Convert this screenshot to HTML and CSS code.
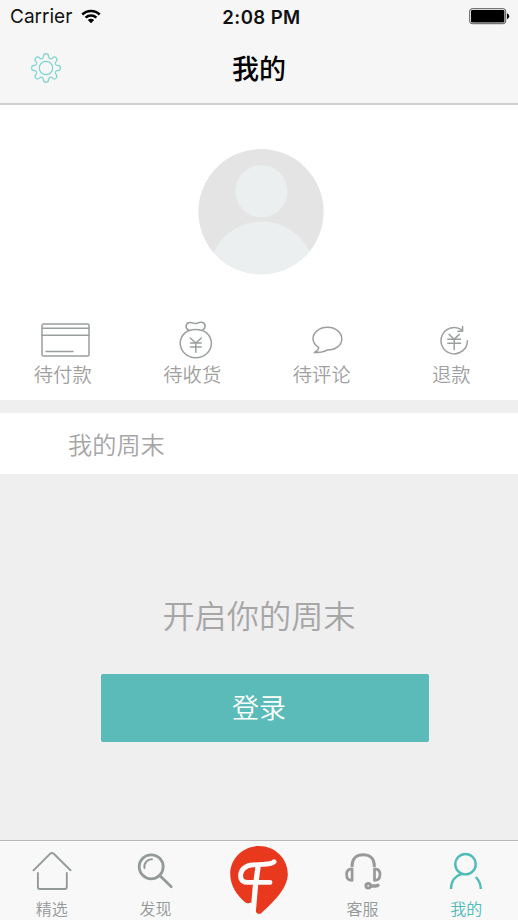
FILE: index.html
```html
<!DOCTYPE html>
<html lang="zh-CN">
<head>
<meta charset="utf-8">
<title>我的</title>
<link rel="stylesheet" href="styles.css">
</head>
<body>
<div class="screen">
  <header class="header">
    <div class="status">
      <div class="carrier">
        <span>Carrier</span>
        <svg class="wifi" width="20" height="15" viewBox="0 0 20 15">
          <path d="M0.4 4.6A13.8 13.8 0 0 1 19.6 4.6L17.8 6.4A11.2 11.2 0 0 0 2.2 6.4Z"/>
          <path d="M3.7 7.8A9.2 9.2 0 0 1 16.3 7.8L14.5 9.6A6.6 6.6 0 0 0 5.5 9.6Z"/>
          <path d="M6.8 11A4.6 4.6 0 0 1 13.2 11L10 14.2Z"/>
        </svg>
      </div>
      <time class="time">2:08 PM</time>
      <svg class="battery" width="41" height="17" viewBox="0 0 41 17">
        <rect x="0.7" y="0.7" width="36" height="15" rx="2.5" fill="none" stroke="#555" stroke-width="1"/>
        <rect x="2" y="2" width="33.4" height="12.4" rx="1.2"/>
        <path d="M38 5.2Q40.2 6 40.2 8.2T38 11.2Z"/>
      </svg>
    </div>
    <div class="navbar">
      <svg class="gear" width="32" height="32" viewBox="-16 -16 32 32">
        <defs><path id="tooth" d="M-3.9-9.4Q-2.3-10-2.6-11.8Q-2.5-14.4 0-14.4T2.6-11.8Q2.3-10 3.9-9.4"/></defs>
        <use href="#tooth"/><use href="#tooth" transform="rotate(45)"/>
        <use href="#tooth" transform="rotate(90)"/><use href="#tooth" transform="rotate(135)"/>
        <use href="#tooth" transform="rotate(180)"/><use href="#tooth" transform="rotate(225)"/>
        <use href="#tooth" transform="rotate(270)"/><use href="#tooth" transform="rotate(315)"/>
        <circle r="6.7"/>
      </svg>
      <h1 class="title">我的</h1>
    </div>
  </header>

  <section class="profile">
    <svg class="avatar" width="126" height="126" viewBox="0 0 126 126">
      <defs><clipPath id="disc"><circle cx="63" cy="62.7" r="62.6"/></clipPath></defs>
      <circle cx="63" cy="62.7" r="62.6" fill="#e4e4e4"/>
      <g clip-path="url(#disc)" fill="#ebeff0">
        <circle cx="63.4" cy="42.3" r="26"/>
        <circle cx="63.8" cy="125.6" r="53"/>
      </g>
    </svg>
    <nav class="orders">
      <a class="order">
        <svg class="line" width="60" height="40" viewBox="33 320 60 40">
          <rect x="42" y="324.1" width="47" height="32" rx="1.3"/>
          <path d="M42 328.3H89M42 335.2H89M46 351.5H73"/>
        </svg>
        <span>待付款</span>
      </a>
      <a class="order">
        <svg class="line" width="60" height="40" viewBox="162.5 320 60 40">
          <ellipse cx="196.3" cy="343.3" rx="15.6" ry="14.4"/>
          <path class="bow" d="M189.5 330.5C185 328 186 322.6 190.5 322.4C193 322.3 194.5 323.6 196 323.6S199 322 202 322.3C206.5 323 207 328 202.5 330.5Q196 328.6 189.5 330.5Z"/>
          <path d="M190.8 338L196.3 343L201.8 338M191 343H201.7M191 347H201.7M196.3 343V352.3"/>
        </svg>
        <span>待收货</span>
      </a>
      <a class="order">
        <svg class="line" width="60" height="40" viewBox="292 320 60 40">
          <path d="M318.7 347.4C314.8 345 313 342 313 338.8C313 332.2 319.5 327.3 327.4 327.3S341.8 332.2 341.8 338.8S335.5 350 327.4 350Q324.5 351.5 321.5 352.1Q318 352.6 314.3 352.6Q318.5 350.3 318.7 347.4Z"/>
        </svg>
        <span>待评论</span>
      </a>
      <a class="order">
        <svg class="line" width="60" height="40" viewBox="421.5 320 60 40">
          <path d="M462.3 329.9A13.2 13.2 0 1 0 467.9 340.7M463.1 326.4V331.3H458.3"/>
          <path d="M449.6 334.4L454.7 339.2L459.8 334.4M448.3 339.2H461.1M448.3 343.2H461.1M454.7 339.2V349.5"/>
        </svg>
        <span>退款</span>
      </a>
    </nav>
  </section>

  <section class="weekend">我的周末</section>

  <main class="login">
    <p class="slogan">开启你的周末</p>
    <button class="login-btn">登录</button>
  </main>

  <nav class="tabs">
    <a class="tab">
      <svg width="60" height="56" viewBox="21.5 843 60 56">
        <path d="M33 870.3L49.5 853.8Q51.4 852 53.3 853.8L70 870.3M37.4 873V887Q37.4 889 39.4 889H64.3Q66.3 889 66.3 887V873" stroke-width="1.9"/>
      </svg>
      <span>精选</span>
    </a>
    <a class="tab">
      <svg width="60" height="56" viewBox="125 843 60 56">
        <circle cx="151.2" cy="866.8" r="12" stroke-width="2.8"/>
        <path d="M144.5 868A7.3 7.3 0 0 1 152 859.3" stroke-width="2"/>
        <path d="M160 875.8L171.3 886.7" stroke-width="2.7"/>
      </svg>
      <span>发现</span>
    </a>
    <a class="tab tab-logo">
      <svg width="60" height="75" viewBox="229 843 60 75">
        <path d="M259 846C243 846 230.2 858.5 230.2 874C230.2 885 237 896 245.5 902.4Q248.5 904.2 251 902.5L255.6 911Q257 915.4 261.2 913.3C272 903 287.8 889 287.8 874C287.8 858.5 275 846 259 846Z" fill="#e8391e" stroke="none"/>
        <path d="M274 861.8C271.5 864.2 267.5 864.1 263 864.4L253 864.9C245.5 865.3 240.8 869.5 240.6 875C240.4 880.6 243.5 882.4 248 882.4H270" stroke="#fcfcfc" stroke-width="4.9"/>
        <path d="M258.3 865L255.4 886L253 914" stroke="#fcfcfc" stroke-width="5.3" stroke-linecap="butt"/>
      </svg>
    </a>
    <a class="tab">
      <svg width="60" height="56" viewBox="332.5 843 60 56">
        <g stroke="#999" stroke-linecap="butt">
          <path d="M351.6 867V865.5C351.6 858.5 356 854.8 362.7 854.8S373.8 858.5 373.8 865.5V867" stroke-width="3"/>
          <path d="M351.6 868.8V880.5C348 880.5 346.1 878.2 346.1 874.6S348 868.8 351.6 868.8ZM374 868.8V880.5C377.6 880.5 379.5 878.2 379.5 874.6S377.6 868.8 374 868.8Z" stroke-width="2.7"/>
          <circle cx="367.7" cy="885.8" r="2.3" stroke-width="2.9"/>
          <path d="M370 886H375Q377 886 378.5 884.3" stroke-width="3.3"/>
        </g>
      </svg>
      <span>客服</span>
    </a>
    <a class="tab active">
      <svg width="60" height="56" viewBox="436 843 60 56">
        <circle cx="465.5" cy="864.2" r="10.2" stroke-width="2.4"/>
        <path d="M451 889C451 881.5 455 875.7 462 873.8M475.8 877C479 880.3 480.7 884.4 480.8 889" stroke-width="2.4" stroke-linecap="butt"/>
      </svg>
      <span>我的</span>
    </a>
  </nav>
</div>
</body>
</html>
```
FILE: styles.css
```css
* { box-sizing: border-box; }
body {
  margin: 0;
  font-family: "Noto Sans CJK SC", sans-serif;
  font-weight: 350;
  background: #efefef;
}
.screen {
  width: 518px;
  height: 920px;
  display: flex;
  flex-direction: column;
  overflow: hidden;
}
.header {
  height: 105px;
  background: #f6f6f6;
  border-bottom: 2px solid #d0d0d0;
}
.status {
  height: 33px;
  padding: 0 8px 0 10px;
  display: grid;
  grid-template-columns: 1fr auto 1fr;
  align-items: center;
  font-family: Inter, sans-serif;
  font-size: 19px;
  font-weight: 400;
  color: #111;
}
.carrier { display: flex; align-items: center; gap: 9px; }
.time {
  padding-left: 3px;
  font-weight: 600;
  font-size: 18.6px;
  letter-spacing: 0.4px;
}
.battery { justify-self: end; }
.navbar {
  height: 69px;
  padding: 0 30px;
  display: grid;
  grid-template-columns: 1fr auto 1fr;
  align-items: center;
}
.gear { fill: none; stroke: #7ed3d1; stroke-width: 1.2; }
.title {
  margin: 0;
  font-size: 27px;
  line-height: 40px;
  font-weight: 500;
  color: #000;
}
.profile {
  height: 295px;
  padding-top: 44px;
  background: #fff;
  display: flex;
  flex-direction: column;
  align-items: center;
}
.avatar { margin-left: 3px; }
.orders {
  width: 100%;
  margin-top: 45px;
  padding-right: 3px;
  display: grid;
  grid-template-columns: repeat(4, 129.5px);
  margin-left: -4px;
}
.order {
  display: flex;
  flex-direction: column;
  align-items: center;
  font-size: 19.3px;
  line-height: 28px;
  color: #a0a0a0;
}
.line {
  fill: none;
  stroke: #9b9f9f;
  stroke-width: 1.5;
  stroke-linecap: round;
  stroke-linejoin: round;
}
.bow { fill: #fff; }
.weekend {
  height: 61px;
  margin-top: 13px;
  padding-left: 68px;
  background: #fff;
  font-size: 24.2px;
  line-height: 61px;
  color: #a6a6a6;
}
.login {
  flex: 1;
  display: flex;
  flex-direction: column;
  align-items: center;
}
.slogan {
  margin: 116px 0 36px;
  font-size: 32.2px;
  line-height: 48px;
  color: #a6a6a6;
}
.login-btn {
  width: 328px;
  height: 68px;
  margin-left: 12px;
  padding: 0 12px 4px 0;
  border: 0;
  border-radius: 2px;
  background: #5abbb9;
  color: #fff;
  font: inherit;
  font-size: 27px;
}
.tabs {
  height: 80px;
  border-top: 1px solid #b8b8b8;
  background: #f8f8f8;
  display: grid;
  grid-template-columns: repeat(5, 1fr);
}
.tab {
  padding-top: 2px;
  display: flex;
  flex-direction: column;
  align-items: center;
  color: #949999;
  font-size: 16px;
  line-height: 18px;
}
.tab svg {
  flex: none;
  fill: none;
  stroke: currentColor;
  stroke-linecap: round;
  stroke-linejoin: round;
}
.active { color: #4dbbb8; }
```
